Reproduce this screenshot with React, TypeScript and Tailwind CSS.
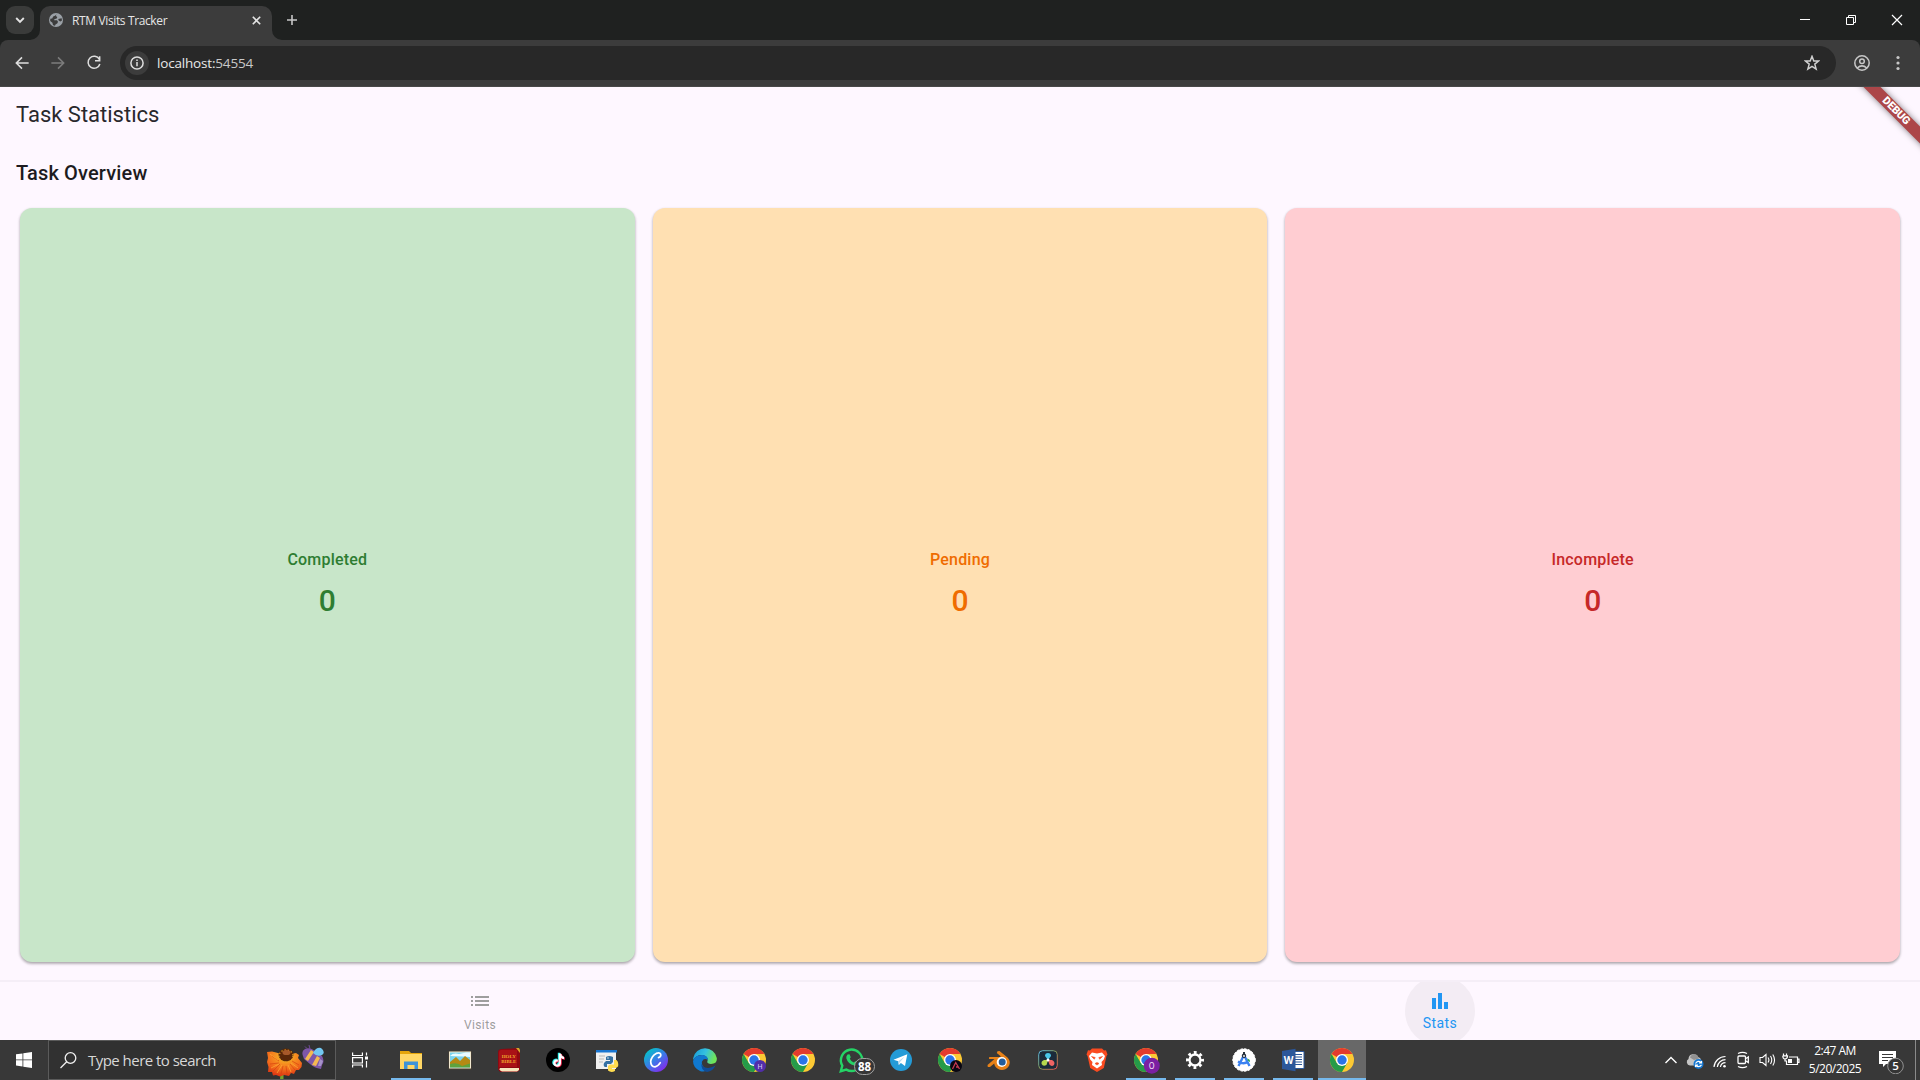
import React from "react";

type IconProps = { className?: string };

const Globe = () => (
  <svg className="h-[14px] w-[14px] shrink-0" viewBox="0 0 14 14">
    <circle cx="7" cy="7" r="7" fill="#9aa0a6" />
    <path d="M7.6 1.2 6.8 3 8.3 4.1 7.7 5.6 5.3 6.2 5.2 7.3H8l1 1.4-.6 1.6-1.9 1.1-.5 1.4A6 6 0 0 1 4 12l-.6-2.2L1.2 7.9 1.3 5.8 3.2 5.4 4.2 3.6 6 2.8Z" fill="#3c3c3c" />
    <path d="M9.2 6 12.6 5.2 13 7.4 11.3 8.4 9.7 7.5Z" fill="#3c3c3c" />
  </svg>
);

const Stroke = ({ d, className = "", w = 1.8 }: { d: string; className?: string; w?: number }) => (
  <svg className={className} viewBox="0 0 24 24" fill="none" stroke="currentColor" strokeWidth={w}>
    <path d={d} />
  </svg>
);

function TabStrip() {
  return (
    <div className="flex h-[40px] items-start bg-[#1f2120]">
      <div className="mt-[6px] ml-[6px] flex h-[28px] w-[28px] items-center justify-center rounded-[9px] bg-[#3a3b3a] text-[#e3e3e3]">
        <svg className="h-[10px] w-[10px]" viewBox="0 0 10 10" fill="none" stroke="currentColor" strokeWidth="1.9">
          <path d="M1.2 3 5 6.8 8.8 3" />
        </svg>
      </div>
      <div className="flex h-[40px] items-end">
        <svg className="-ml-[4px] h-[10px] w-[10px]" viewBox="0 0 10 10">
          <path d="M10 0V10H0A10 10 0 0 0 10 0Z" fill="#3c3c3c" />
        </svg>
        <div className="flex h-[34px] w-[232px] items-center rounded-t-[10px] bg-[#3c3c3c] pb-[6px] pl-[9px]">
          <Globe />
          <span className="mt-[2px] ml-[9px] w-[150px] whitespace-nowrap font-['Open_Sans','Noto_Sans',sans-serif] text-[12px] leading-[16px] tracking-[-0.37px] text-[#e6e6e6]">RTM Visits Tracker</span>
          <svg className="ml-[29.500px] h-[9px] w-[9px] text-[#e3e3e3]" viewBox="0 0 9 9" fill="none" stroke="currentColor" strokeWidth="1.6">
            <path d="M.8.8 8.2 8.2M8.2.8.8 8.2" />
          </svg>
        </div>
        <svg className="h-[10px] w-[10px]" viewBox="0 0 10 10">
          <path d="M0 0V10H10A10 10 0 0 1 0 0Z" fill="#3c3c3c" />
        </svg>
      </div>
      <svg className="mt-[15px] ml-[5px] h-[10px] w-[10px]" viewBox="0 0 10 10" fill="none" stroke="#c7c7c7" strokeWidth="1.6">
        <path d="M5 0V10M0 5H10" />
      </svg>
      <div className="mt-[14px] mr-[17px] ml-auto flex items-center text-white">
        <svg className="mr-[36px] h-[12px] w-[10px]" viewBox="0 0 10 12"><path d="M0 5H10V6H0Z" fill="currentColor" /></svg>
        <svg className="mr-[35px] h-[12px] w-[10px]" viewBox="0 0 10 12" fill="none" stroke="currentColor"><path d="M.5 3.500H7.500V10.500H.5ZM2.500 3.500V1.500H9.500V8.500H7.500" /></svg>
        <svg className="h-[12px] w-[12px]" viewBox="0 0 12 12" fill="none" stroke="currentColor" strokeWidth="1.2"><path d="M1 1 11 11M11 1 1 11" /></svg>
      </div>
    </div>
  );
}

function Toolbar() {
  return (
    <div className="bg-[#1f2120]">
      <div className="flex h-[47px] items-center rounded-t-[8px] border-b border-[#484848] bg-[#3c3c3c]">
        <Stroke className="ml-[14px] h-[16px] w-[16px] text-[#dedede]" w={2.3} d="M22 12H4M12 3.500 3.500 12 12 20.500" />
        <Stroke className="ml-[20px] h-[16px] w-[16px] text-[#7c7c7c]" w={2.3} d="M2 12H20M12 3.500 20.500 12 12 20.500" />
        <Stroke className="ml-[20px] h-[16px] w-[16px] text-[#dedede]" w={2.3} d="M20 6.500A9 9 0 1 0 20.800 13.500M20.500 2V8.500H13.500" />
        <div className="ml-[18px] flex h-[34px] w-[1716px] items-center rounded-full bg-[#282828] pl-[5px]">
          <div className="flex h-[24px] w-[24px] items-center justify-center rounded-full bg-[#3c3c3c]">
            <svg className="h-[14px] w-[14px]" viewBox="0 0 14 14" fill="none" stroke="#dedede" strokeWidth="1.5">
              <circle cx="7" cy="7" r="6.1" /><path d="M7 6V10.300M7 3.500V5" />
            </svg>
          </div>
          <span className="ml-[8px] font-['Open_Sans','Noto_Sans',sans-serif] text-[13.500px] leading-[18px] tracking-[-0.18px] text-[#e8e8e8]">localhost:<span className="text-[#c8c8c8]">54554</span></span>
          <svg className="mr-[16px] ml-auto h-[16px] w-[16px]" viewBox="0 0 24 24" fill="none" stroke="#d0d0d0" strokeWidth="2.200">
            <path d="m12 2 2.700 7h7.300l-5.800 4.700 2 7.300L12 16.900 5.800 21l2-7.300L2 9h7.300Z" />
          </svg>
        </div>
        <svg className="ml-[18px] h-[16px] w-[16px]" viewBox="0 0 16 16" fill="none" stroke="#c7c7c7" strokeWidth="1.500">
          <circle cx="8" cy="8" r="7.200" /><circle cx="8" cy="6.300" r="2.300" /><path d="M3.200 13Q8 8.800 12.800 13" />
        </svg>
        <svg className="ml-[26px] h-[16px] w-[4px]" viewBox="0 0 4 16" fill="#c7c7c7">
          <circle cx="2" cy="2.500" r="1.600" /><circle cx="2" cy="8" r="1.600" /><circle cx="2" cy="13.500" r="1.600" />
        </svg>
      </div>
    </div>
  );
}

const cards = [
  { label: "Completed", count: 0, style: "bg-[#c8e6c9] text-[#2e7d32]" },
  { label: "Pending", count: 0, style: "bg-[#ffe0b2] text-[#ef6c00]" },
  { label: "Incomplete", count: 0, style: "bg-[#ffcdd2] text-[#c62828]" },
];

function StatsPage() {
  return (
    <div className="relative flex h-[953px] flex-col overflow-hidden bg-[#fef7ff] font-['Roboto',sans-serif]">
      <h1 className="flex h-[56px] items-center px-[16px] text-[22px] leading-[28px] text-[#29272c]">Task Statistics</h1>
      <h2 className="mt-[16px] px-[16px] text-[20px] leading-[28px] font-medium tracking-[0.15px] text-[#1d1b20]">Task Overview</h2>
      <div className="mx-[20px] mt-[21px] grid h-[754px] grid-cols-3 gap-[18px]">
        {cards.map((c) => (
          <div key={c.label} className={"flex flex-col items-center justify-center rounded-[12px] shadow-[0_1px_3px_rgba(0,0,0,0.16),0_2px_3px_rgba(0,0,0,0.22)] " + c.style}>
            <div className="text-[16px] leading-[24px] font-medium tracking-[0.2px]">{c.label}</div>
            <div className="mt-[8px] text-[30px] leading-[42px] font-medium">{c.count}</div>
          </div>
        ))}
      </div>
      <nav className="mt-auto flex h-[60px] border-t-2 border-[#f5eef7]">
        <div className="flex w-1/2 flex-col items-center pt-[13px] text-[#9e9e9e]">
          <svg className="h-[12px] w-[18px]" viewBox="0 0 18 12" fill="currentColor">
            <path d="M0 1H2V3H0ZM4 1H18V3H4ZM0 5H2V7H0ZM4 5H18V7H4ZM0 9H2V11H0ZM4 9H18V11H4Z" />
          </svg>
          <span className="mt-[10px] text-[12px] leading-[16px] tracking-[0.4px]">Visits</span>
        </div>
        <div className="flex w-1/2 justify-center overflow-hidden text-[#2196f3]">
          <div className="-mt-[6px] flex h-[70px] w-[70px] flex-col items-center rounded-full bg-[#f3ecf4] pt-[17px]">
            <svg className="h-[16px] w-[16px]" viewBox="0 0 16 16" fill="currentColor">
              <path d="M0 5H4V16H0ZM6 0H10V16H6ZM12 9H16V16H12Z" />
            </svg>
            <span className="mt-[5px] text-[14px] leading-[18px] tracking-[0.4px]">Stats</span>
          </div>
        </div>
      </nav>
      <div className="absolute top-[17.500px] right-[-36px] flex h-[12px] w-[120px] rotate-45 items-center justify-center bg-[#ac4649] text-[10.800px] leading-[12px] font-black tracking-[-0.1px] text-white shadow-[0_0_6px_rgba(0,0,0,0.5)]">DEBUG</div>
    </div>
  );
}

const icon = "h-[24px] w-[24px]";

const Explorer = () => (
  <svg className={icon} viewBox="0 0 24 24"><path d="M1 3H10L12 5H23V21H1Z" fill="#e5a50b" /><path d="M1 6H23V21H1Z" fill="#ffd766" /><path d="M5 21V13.500H19V21H15.500V17H8.500V21Z" fill="#3d93d8" /></svg>
);
const Photos = () => (
  <svg className={icon} viewBox="0 0 24 24"><path d="M.5 3H23.500V21.500H.5Z" fill="#4c4335" /><path d="M1 3.500H23V20.500H1Z" fill="#f1e8cf" /><path d="M2 4.500H22V19.500H2Z" fill="#79d3ef" /><path d="M2 8Q5 4.500 11 6L18 4.500H22V9L15 8.500Z" fill="#e9fbff" /><path d="M2 14 8 9 12 13 17 8 22 12V19H2Z" fill="#b58a14" /><path d="M2 16Q10 14 14 18L22 15.500V19.500H2Z" fill="#5fa23c" /></svg>
);
const Bible = () => (
  <svg className={icon} viewBox="0 0 24 24"><path d="M1 4Q1 1 5 1L21 0 23 2V22L20 24H4Q1 23 1 20Z" fill="#8f0911" /><path d="M4 2H20V19H2V5Q2 2 4 2Z" fill="#a91116" /><path d="M3 20H22V22L20 23.500H5Q1.500 22.500 3 20Z" fill="#f7e6bc" /><path d="M19 0H22L23 2V5Z" fill="#d7a42a" /><text x="11.800" y="9.900" textAnchor="middle" fontSize="5" fontWeight="700" fill="#f0a52c" fontFamily="Liberation Serif">HOLY</text><text x="11.800" y="14.500" textAnchor="middle" fontSize="5" fontWeight="700" fill="#f0a52c" fontFamily="Liberation Serif">BIBLE</text></svg>
);
const noteD = "M12.800 5.500H15Q15.300 8.300 18 8.800V11.100Q16.300 11 15 10.100V15Q14.700 18.800 11 18.800 7.200 18.300 7.200 15 7.500 11.200 11.800 11.200V13.600Q9.500 13.500 9.400 15 9.700 16.700 11 16.700 12.700 16.500 12.800 14.700Z";
const TikTok = () => (
  <svg className={icon} viewBox="0 0 24 24"><circle cx="12" cy="12" r="12" fill="#000" /><path d={noteD} transform="translate(-1 -.7)" fill="#25f4ee" /><path d={noteD} transform="translate(.8 .6)" fill="#fe2c55" /><path d={noteD} fill="#fff" /></svg>
);
const Python = () => (
  <svg className={icon} viewBox="0 0 24 24"><path d="M1 2H21V21H1Z" fill="#f0f0f0" /><path d="M1 2H22V4.500H1Z" fill="#1976d2" /><path d="M4 8H10M4 11H9M4 14H8" stroke="#b9b9b9" /><path d="M11 9Q14 7 18 9V14L16 16H12V19H10Q8 18 9 15L11 13H15V12H11Z" fill="#3571a3" /><path d="M19 12H21.500Q24 14 23 18.500L21 20H17V21H20V23Q16 25 13 22.500V18L15 16.500H19Z" fill="#ffdc4f" /><circle cx="13" cy="10" r=".7" fill="#fff" /></svg>
);
const Canva = () => (
  <svg className={icon} viewBox="0 0 24 24"><defs><linearGradient id="cv" x1="0" y1="0" x2=".8" y2="1"><stop offset=".15" stopColor="#08bfca" /><stop offset=".55" stopColor="#3b7ae8" /><stop offset="1" stopColor="#8a22ed" /></linearGradient></defs><circle cx="12" cy="12" r="12" fill="url(#cv)" /><path d="M14.500 9.600Q17.300 8.700 16.700 6.200 15.700 4 12.300 5.400 7.600 8 6.700 13.200 6.700 18.800 11 18.800 14.300 18.200 16.300 14.700" fill="none" stroke="#fff" strokeWidth="1.700" strokeLinecap="round" /></svg>
);
const Edge = () => (
  <svg className={icon} viewBox="0 0 24 24"><defs><linearGradient id="eg" x1="0" y1="0" x2="1" y2=".3"><stop stopColor="#1599d9" /><stop offset=".55" stopColor="#35c1e0" /><stop offset="1" stopColor="#6ee45b" /></linearGradient></defs><path d="M.2 10A12 12 0 0 1 23.800 10Q24.500 16 18 16 14 16 14.300 13.500 16 9 10.500 7.200 4 6 .2 12Z" fill="url(#eg)" /><path d="M0 13Q2 6.500 10 7 15 8 15 12 11 9.500 9 13.500 8 20 16 21.500 12 24.500 7.500 23.200 0 20 0 13Z" fill="#1079d0" /><path d="M8.800 14Q8 17.500 12 19.500 17 21 22.500 17.500 20 23 14 24 7 22 8.800 14Z" fill="#114c95" /></svg>
);
const Chrome = ({ badge }: { badge?: "H" | "A" | "O" }) => (
  <svg className="h-[24px] w-[24px] overflow-visible" viewBox="0 0 24 24">
    <circle cx="12" cy="12" r="12" fill="#fcc934" />
    <path d="M12 12 1.600 6A12 12 0 0 1 22.400 6H12Z" fill="#e33b2e" />
    <path d="M1.600 6A12 12 0 0 0 12 24L17.200 15 12 12 6.800 15Z" fill="#259b49" />
    <circle cx="12" cy="12" r="6" fill="#fff" /><circle cx="12" cy="12" r="4.700" fill="#2b74e8" />
    {badge === "H" && <><circle cx="18" cy="18" r="6" fill="#512da8" /><text x="18" y="20.600" fontSize="7" textAnchor="middle" fill="#d9cef5" fontFamily="Roboto">H</text></>}
    {badge === "A" && <><circle cx="18" cy="18" r="6" fill="#090711" /><path d="m14.500 21 3.200-6.500 3.800 6.500M18 19h2" fill="none" stroke="#c63b52" strokeWidth="1.300" /></>}
    {badge === "O" && <><circle cx="17.800" cy="17.700" r="8" fill="#7b1fa2" /><text x="17.800" y="20.900" fontSize="8.500" textAnchor="middle" fill="#f1dff7" fontFamily="Roboto">O</text></>}
  </svg>
);
const WhatsApp = () => (
  <svg className="h-[28px] w-[36px] translate-x-[5px] translate-y-[2px] overflow-visible" viewBox="0 0 36 28">
    <path d="M1.800 23.200 3.300 17.600A10.700 10.700 0 1 1 7.300 21.600Z" fill="none" stroke="#25d366" strokeWidth="2.400" />
    <path d="M8.500 6.500 10.500 6.300 11.800 9.200 10.800 10.800Q12 13.500 14.800 14.600L16.300 13.200 19 14.600Q18.500 18 15.300 17.600 9 16 7.300 10.200 7 8 8.500 6.500Z" fill="#25d366" />
    <rect x="15.500" y="10.500" width="20" height="16" rx="8" fill="#363636" stroke="#a1a1a1" />
    <text x="25.500" y="22.700" textAnchor="middle" fontSize="11.500" fontWeight="700" fill="#fff" fontFamily="Open Sans">88</text>
  </svg>
);
const Telegram = () => (
  <svg className={icon} viewBox="0 0 24 24"><circle cx="12" cy="12" r="11" fill="#249bd7" /><path d="M4.500 11.700 18.300 6.300 16 18 11.900 15 9.800 17 9.300 13.200Z" fill="#fff" /><path d="M9.300 13.200 15.500 8.800 10.800 14.200 9.800 17Z" fill="#b8d9ee" /></svg>
);
const Blender = () => (
  <svg className={icon} viewBox="0 0 24 24"><path d="M10.500 3.200 12.500 3 20.500 9.400A7.800 7.400 0 1 1 7.200 15.500L3 19H.8L.5 17 7.500 11H2L2.200 9H12.800L14 8.400 9.800 5Z" fill="#e88218" /><circle cx="14.800" cy="14" r="5.100" fill="#fff" /><circle cx="15.200" cy="14" r="3.500" fill="#235d9c" /></svg>
);
const DaVinci = () => (
  <svg className={icon} viewBox="0 0 24 24"><defs><linearGradient id="dv" x1="0" y1="0" x2="1" y2="1"><stop stopColor="#5cb9e8" /><stop offset=".5" stopColor="#859b56" /><stop offset="1" stopColor="#e95254" /></linearGradient></defs><rect x="2.700" y="2.700" width="18.600" height="18.600" rx="4" fill="#1b2b3a" stroke="url(#dv)" /><path d="M12 12 9 8Q9 5 12 5T15 8Z" fill="#49c6e8" /><path d="M12 12 10.500 17Q7 19 5.600 16 5 13 8 12Z" fill="#b7d84d" /><path d="M12 12 16 12Q19.500 13.500 18 17 15.500 19 13.400 16.500Z" fill="#ee6363" /><circle cx="12" cy="12" r="1.500" fill="#fff" /></svg>
);
const Brave = () => (
  <svg className={icon} viewBox="0 0 24 24"><path d="M7 .5H17L19 2.500 21 2.300 22.500 6.500 21.500 8 18.800 20 12 24 5.200 20 2.500 8 1.500 6.500 3 2.300 5 2.500Z" fill="#fa4b20" /><path d="M7 4.500 12 5.500 17 4.500 20 8 18.800 11.500 16.500 14 17 17 12 20.500 7 17 7.500 14 5.200 11.500 4 8Z" fill="#fff" /><path d="M6.500 8.500 10.200 9.500 9.300 11.200ZM17.500 8.500 13.800 9.500 14.700 11.200ZM10 15.500 12 14.500 14 15.500 12 17Z" fill="#fa4b20" stroke="#fa4b20" strokeWidth=".6" /></svg>
);
const Settings = () => (
  <svg className={icon} viewBox="0 0 24 24" stroke="#fff" fill="none"><circle cx="12" cy="12" r="5.500" strokeWidth="2.300" /><circle cx="12" cy="12" r="7.500" strokeWidth="3" strokeDasharray="2.800 3.090" strokeDashoffset="1.400" /></svg>
);
const AndroidStudio = () => (
  <svg className={icon} viewBox="0 0 24 24"><circle cx="12" cy="12" r="11.300" fill="#fff" stroke="#fff" strokeDasharray="2.200 1.600" /><path d="M11.500 8 6.500 18M12.500 8 17.500 18M6 13.500Q12 17 16 13.500" fill="none" stroke="#3b82f1" strokeWidth="2.400" /><path d="M15 10.500Q18.500 11 18 14L16 13Z" fill="#31a75a" /><circle cx="12" cy="7.800" r="2.200" fill="#25303b" /><circle cx="12" cy="8" r=".9" fill="#fff" /><path d="M11 4H13V6H11Z" fill="#25303b" /></svg>
);
const Word = () => (
  <svg className={icon} viewBox="0 0 24 24"><path d="M12 3.500H23V20.500H12Z" fill="#fff" stroke="#2b579a" /><path d="M14 6.500H21M14 9H21M14 11.500H21M14 14H21M14 16.500H21" stroke="#2b579a" strokeWidth="1.100" /><path d="M1 3 14.500.8V23.200L1 21Z" fill="#2b579a" /><text x="7.500" y="15.800" textAnchor="middle" fontSize="10" fontWeight="700" fill="#fff" fontFamily="Open Sans">W</text></svg>
);

const apps: { name: string; node: React.ReactNode; open?: boolean; active?: boolean }[] = [
  { name: "explorer", node: <Explorer />, open: true },
  { name: "photos", node: <Photos /> },
  { name: "bible", node: <Bible /> },
  { name: "tiktok", node: <TikTok /> },
  { name: "python", node: <Python /> },
  { name: "canva", node: <Canva /> },
  { name: "edge", node: <Edge /> },
  { name: "chrome-h", node: <Chrome badge="H" /> },
  { name: "chrome", node: <Chrome /> },
  { name: "whatsapp", node: <WhatsApp /> },
  { name: "telegram", node: <Telegram /> },
  { name: "chrome-a", node: <Chrome badge="A" /> },
  { name: "blender", node: <Blender /> },
  { name: "davinci", node: <DaVinci /> },
  { name: "brave", node: <Brave /> },
  { name: "chrome-o", node: <Chrome badge="O" />, open: true },
  { name: "settings", node: <Settings />, open: true },
  { name: "android-studio", node: <AndroidStudio />, open: true },
  { name: "word", node: <Word />, open: true },
  { name: "chrome-active", node: <Chrome />, open: true, active: true },
];

const Flower = ({ className }: IconProps) => (
  <svg className={className} viewBox="0 0 58 36">
    <defs>
      <radialGradient id="petal" cx=".52" cy=".2" r=".8">
        <stop offset=".2" stopColor="#f7a623" /><stop offset=".6" stopColor="#f4721c" /><stop offset="1" stopColor="#dc3413" />
      </radialGradient>
    </defs>
    <path d="M14.500 28H17.500V36H14Z" fill="#79a32b" />
    <path d="M1 8 6 7.500 12 9 25 10 30 9 33 11 32 14 36 19 35.500 23 33 26 30 26 28 30 25 29 23 32 18 31 14 32.500 10 31 7 31.500 6 28 2 28 2.500 23 1 18 2 14Z" fill="url(#petal)" />
    <path d="M13 17 6 12M13 19 4 20M14 20 7 27M17 22 15 30M20 22 21 30M24 20 29 26M26 17 33 21" stroke="#d5400f" strokeWidth=".8" opacity=".8" />
    <path d="M12 16 4 10M13 20 5 24M16 21 11 29M22 21 25 28M25 19 32 24" stroke="#ffab35" strokeWidth=".9" opacity=".8" />
    <ellipse cx="20" cy="11" rx="7.500" ry="6.500" fill="#5a2709" />
    <ellipse cx="20" cy="12" rx="7" ry="6" fill="none" stroke="#e3a326" strokeWidth="1.300" strokeDasharray="1.200 2" />
    <ellipse cx="20.500" cy="8.500" rx="4" ry="2.600" fill="#a6582a" />
    <path d="M41 4.500 39 2.500M44 5 43 1" stroke="#714a98" strokeWidth="1" />
    <path d="M39 5Q44 3 49 7L56 12Q59 17 56 21L55 25Q48 24 44 20L38 15 37 12Q35 7 39 5Z" fill="#7e57a8" />
    <path d="M45 6 48 8 42 17 39 15ZM51 12 54 14 50 22 46 21Z" fill="#f5b951" />
    <path d="M54 15 57 17 55 22 52 22Z" fill="#a592c8" />
    <path d="M47 9Q50 3 55 4 60 8 56 11 51 13 47 9Z" fill="#72c7f2" />
  </svg>
);

function Tray() {
  return (
    <div className="ml-auto flex h-[40px] items-center text-white">
      <svg className="h-[8px] w-[14px]" viewBox="0 0 14 8" fill="none" stroke="currentColor" strokeWidth="1.400"><path d="M1.500 7 7 1.500 12.500 7" /></svg>
      <svg className="mt-[2px] ml-[8px] h-[16px] w-[18px]" viewBox="0 0 18 16"><path d="M4 12.500A3.500 3.500 0 0 1 2.500 6 5 5 0 0 1 12 4Q15.500 5 15.500 9V12.500Z" fill="#c5c5c5" /><path d="M4 4.500A4.500 4.500 0 0 1 11.500 2.500L13 5.500 8 7Z" fill="#929292" /><circle cx="12.500" cy="11" r="5" fill="#1778d2" /><path d="M9.500 10.500Q12 6.800 15 9.500M15.500 8V10H13M15.500 11.800Q13 15 10 12.500M9.500 14V12H12" fill="none" stroke="#fff" strokeWidth="1.100" /></svg>
      <svg className="mt-[1px] ml-[8px] h-[16px] w-[16px]" viewBox="0 0 16 16" fill="none" stroke="currentColor" strokeWidth="1.200"><path d="M2 14A11.500 11.500 0 0 1 13.500 3.500M5.300 14A8.300 8.300 0 0 1 13.500 6.700M8.400 14A5.200 5.200 0 0 1 13.500 9.700" /><circle cx="12.500" cy="13.200" r="1.300" fill="currentColor" stroke="none" /></svg>
      <svg className="ml-[8px] h-[18px] w-[14px]" viewBox="0 0 14 18" fill="none" stroke="currentColor" strokeWidth="1.300"><path d="M2 2.500Q6.500.3 11 2.500M2 15.500Q6.500 17.700 11 15.500" /><rect x="2" y="5" width="7.500" height="7.500" rx="1" /><path d="M10 7.500 12.300 6V11.500L10 10" /></svg>
      <svg className="ml-[9px] h-[16px] w-[17px]" viewBox="0 0 17 16" fill="none" stroke="currentColor" strokeWidth="1.100"><path d="M1 5.500H3.500L7 2.500V13.500L3.500 10.500H1ZM9 5.500Q10.800 8 9 10.500M11.500 4Q14 8 11.500 12M13.800 2.500Q17.300 8 13.800 13.500" /></svg>
      <svg className="ml-[6px] h-[14px] w-[18px]" viewBox="0 0 18 14" fill="none" stroke="currentColor" strokeWidth="1.200"><path d="M7 4H15.500V11.500H4.500V8M15.500 6.200H17V9.300H15.500" /><path d="M6 6H10V10H6Z" fill="currentColor" stroke="none" /><path d="M1.500.5V2.500M4.500.5V2.500M.8 2.800H5.500Q5.500 6 3 6 .8 6 .8 2.800M3 6V8H5" /></svg>
      <div className="ml-[8px] w-[54px] text-center font-['Open_Sans','Noto_Sans',sans-serif] text-[12px] leading-[18px] tracking-[-0.5px] whitespace-nowrap">
        <div>2:47 AM</div>
        <div>5/20/2025</div>
      </div>
      <svg className="ml-[17px] h-[28px] w-[26px]" viewBox="0 0 26 28"><path d="M0 5H17V18H7L4 21V18H0Z" fill="#fff" /><path d="M3 8.500H14M3 11.500H14M3 14.500H9" stroke="#383838" /><circle cx="16.500" cy="20" r="7.800" fill="#353535" stroke="#919191" /><text x="16.500" y="24.200" textAnchor="middle" fontSize="11.500" fontWeight="600" fill="#fff" fontFamily="Open Sans">5</text></svg>
      <div className="mr-[4px] ml-[10px] h-[40px] w-px bg-[#8a8a8a]" />
    </div>
  );
}

function Taskbar() {
  return (
    <div className="flex h-[40px] items-center bg-[#383838]">
      <div className="flex w-[48px] justify-center">
        <svg className="h-[16px] w-[16px]" viewBox="0 0 16 16" fill="#fff"><path d="M0 2.300 6.500 1.400V7.500H0ZM7.300 1.300 16 0V7.500H7.300ZM0 8.300H6.500V14.500L0 13.600ZM7.300 8.300H16V16L7.300 14.700Z" /></svg>
      </div>
      <div className="flex h-[40px] w-[288px] items-center overflow-hidden border border-[#5b5b5b] bg-[#313131]">
        <svg className="ml-[11px] h-[17px] w-[17px]" viewBox="0 0 17 17" fill="none" stroke="#f0f0f0" strokeWidth="1.300"><circle cx="10.500" cy="6" r="5.300" /><path d="M6.700 9.800.5 16" /></svg>
        <span className="ml-[11px] w-[130px] font-['Open_Sans','Noto_Sans',sans-serif] text-[15px] leading-[20px] tracking-[-0.53px] whitespace-nowrap text-[#d8d8d8]">Type here to search</span>
        <Flower className="mt-[4px] ml-[48px] h-[36px] w-[58px]" />
      </div>
      <div className="mr-[3px] flex w-[48px] justify-center">
        <svg className="h-[16px] w-[16px]" viewBox="0 0 16 16" fill="none" stroke="#fff" strokeWidth="1.200"><path d="M.6.5V3.500H10.400V.5M.6 5.600H10.400V11H.6ZM.6 15.500V13H10.400V15.500M14.500.5V3.500M14.500 9V15.500" /><path d="M13 4.500H16V7.500H13Z" fill="#fff" stroke="none" /></svg>
      </div>
      <div className="flex gap-px">
        {apps.map((a) => (
          <div key={a.name} className={"flex h-[40px] w-[48px] flex-col items-center " + (a.active ? "bg-[#686868]" : "")}>
            <div className="flex h-[38px] items-center pt-[2px]">{a.node}</div>
            {a.open && <div className={a.active ? "h-[2px] w-[48px] bg-[#76b9ed]" : "h-[2px] w-[40px] bg-[#76b9ed]"} />}
          </div>
        ))}
      </div>
      <Tray />
    </div>
  );
}

export default function App() {
  return (
    <div className="flex h-[1080px] w-[1920px] flex-col overflow-hidden">
      <TabStrip />
      <Toolbar />
      <StatsPage />
      <Taskbar />
    </div>
  );
}
